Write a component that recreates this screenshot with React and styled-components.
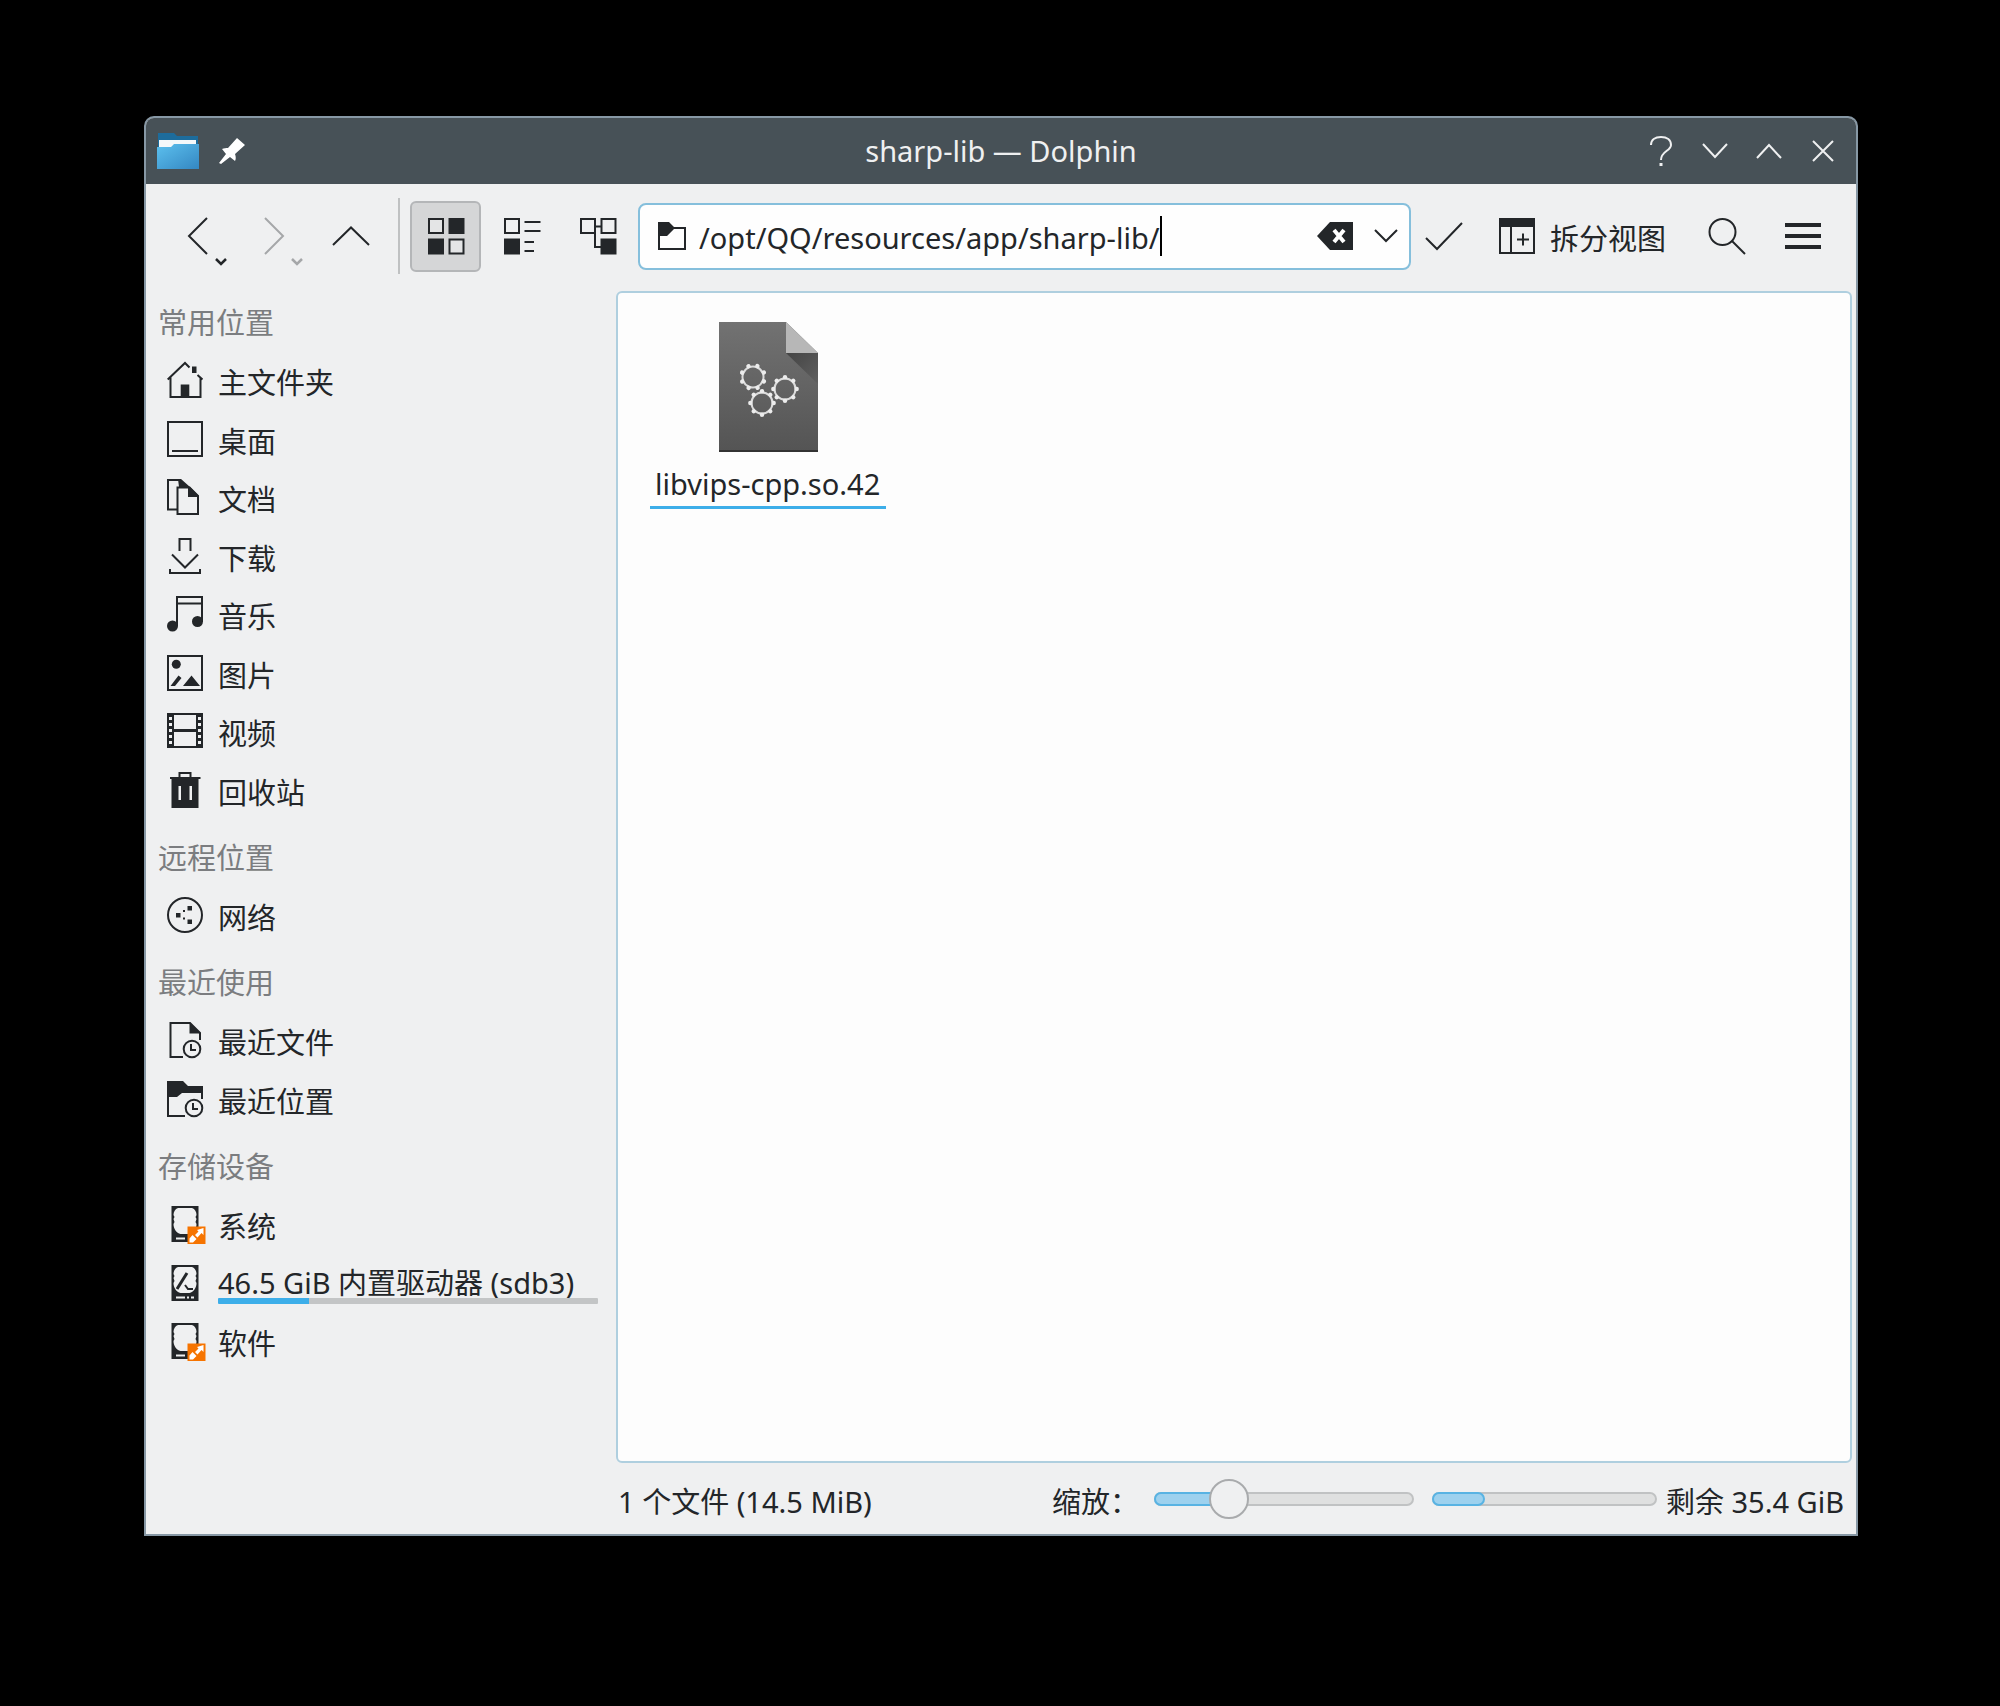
import React from "react";
import styled, { createGlobalStyle } from "styled-components";

const ink = "#232629";
const panel = "#eff0f1";
const accent = "#3daee9";

const GlobalStyle = createGlobalStyle`
  *, *::before, *::after { box-sizing: border-box; }
  body {
    margin: 0;
    background: #000;
    color: ${ink};
    font: 29px/40px "Noto Sans", "Noto Sans CJK SC", sans-serif;
  }
  button, input { font: inherit; color: inherit; }
`;

const Desktop = styled.div`
  display: flex;
  min-height: 100vh;
  padding: 116px 142px 170px 144px;
`;

const Window = styled.main`
  flex: 1;
  display: flex;
  flex-direction: column;
  min-width: 0;
  border: 2px solid #8798a5;
  border-radius: 10px 10px 0 0;
  overflow: hidden;
  background: ${panel};
`;

const TitleBar = styled.header`
  display: grid;
  grid-template-columns: 1fr auto 1fr;
  align-items: center;
  height: 66px;
  padding: 0 6px;
  background: #475157;
  color: #eff0f1;
`;

const TitleIcons = styled.div`
  display: flex;
  align-items: center;
  gap: 18px;
  padding-left: 5px;
`;

const Title = styled.h1`
  margin: 0;
  font-size: 29px;
  font-weight: 400;
`;

const TitleButtons = styled.div`
  display: flex;
  justify-content: flex-end;
`;

const TitleButton = styled.button`
  display: grid;
  place-items: center;
  width: 54px;
  height: 54px;
  padding: 0;
  border: 0;
  background: none;
`;

const PinButton = styled(TitleButton)`
  width: 30px;
`;

const Toolbar = styled.div`
  display: flex;
  align-items: center;
  gap: 5px;
  padding: 14px 18px 17px 17px;
`;

const ToolButton = styled.button`
  flex: none;
  display: flex;
  align-items: center;
  justify-content: center;
  gap: 15px;
  width: ${(p) => p.$width || "71px"};
  height: 71px;
  padding: ${(p) => (p.$width === "auto" ? "0 18px 0 20px" : "0")};
  border: 2px solid ${(p) => (p.$checked ? "#b4b6b8" : "transparent")};
  border-radius: 6px;
  background: ${(p) => (p.$checked ? "#d5d6d7" : "none")};
  color: ${(p) => (p.disabled ? "#a5a7a9" : ink)};
`;

const ToolLabel = styled.span`
  padding-top: 5px;
`;

const Separator = styled.div`
  width: 2px;
  height: 76px;
  margin: 0 5px 0 7px;
  background: #bfc1c2;
`;

const Location = styled.form`
  flex: 1;
  display: flex;
  align-items: center;
  min-width: 0;
  height: 67px;
  padding: 0 0 0 18px;
  border: 2px solid #85bfdc;
  border-radius: 8px;
  background: #fefefe;
`;

const PathInput = styled.input`
  field-sizing: content;
  min-width: 0;
  height: 42px;
  margin-left: 13px;
  padding: 2px 0 0;
  border: 0;
  outline: 0;
  background: none;
  caret-color: transparent;
`;

const Caret = styled.span`
  width: 2px;
  height: 40px;
  margin-right: auto;
  background: #000;
`;

const FieldButton = styled.button`
  display: grid;
  place-items: center;
  width: 46px;
  height: 46px;
  margin-left: 5px;
  padding: 0;
  border: 0;
  background: none;
`;

const Body = styled.div`
  flex: 1;
  display: grid;
  grid-template-columns: 470px minmax(0, 1fr);
`;

const Sidebar = styled.nav`
  padding: 2px 18px 0 0;
`;

const Group = styled.section`
  & + & { padding-top: 9px; }
`;

const GroupTitle = styled.h2`
  margin: 0;
  padding: 2px 12px 0;
  font-size: 29px;
  font-weight: 400;
  line-height: 56px;
  color: #7b7d80;
`;

const Places = styled.ul`
  display: grid;
  grid-auto-rows: 58px 59px;
  margin: 0;
  padding: 0;
  list-style: none;
`;

const Place = styled.a`
  display: flex;
  align-items: center;
  gap: 15px;
  height: 100%;
  padding-left: 21px;
  color: inherit;
  text-decoration: none;
  white-space: nowrap;
`;

const PlaceText = styled.span`
  flex: 1;
  display: flex;
  flex-direction: column;
  padding-top: 6px;
  line-height: ${(p) => (p.$compact ? "30px" : "40px")};
`;

const Capacity = styled.span`
  height: 6px;
  border-radius: 1px;
  background: linear-gradient(to right, ${accent} ${(p) => p.$used}%, #c3c5c6 ${(p) => p.$used}%);
`;

const Content = styled.div`
  display: flex;
  flex-direction: column;
  padding-right: 4px;
`;

const FileView = styled.section`
  flex: 1;
  display: flex;
  flex-wrap: wrap;
  align-content: flex-start;
  padding: 29px 32px;
  border: 2px solid #afcfdf;
  border-radius: 6px;
  background: #fdfdfd;
`;

const FileItem = styled.a`
  display: flex;
  flex-direction: column;
  align-items: center;
  gap: 12px;
  color: inherit;
  text-decoration: none;
`;

const FileName = styled.span`
  padding: 0 6px 2px 5px;
  border-bottom: 3px solid ${accent};
  line-height: 40px;
`;

const StatusBar = styled.footer`
  display: flex;
  align-items: center;
  height: 71px;
  padding: 0 8px 0 2px;
  white-space: nowrap;
`;

const StatusText = styled.span`
  padding-top: 6px;
`;

const Spacer = styled.span`
  flex: 1;
`;

const ZoomLabel = styled.label`
  margin-right: 15px;
  padding-top: 6px;
`;

const ZoomControl = styled.div`
  display: grid;
  align-items: center;
  width: 260px;
  margin-right: 18px;
  & > * { grid-area: 1 / 1; }
`;

const Rail = styled.div`
  height: 14px;
  border-radius: 7px;
  border: 2px solid #c0c2c3;
  background: #dfe0e0;
`;

const Fill = styled.div`
  width: ${(p) => p.$width}%;
  height: 14px;
  margin: -2px;
  border-radius: 7px;
  border: 2px solid #58b3e3;
  background: #9dd1ee;
`;

const Range = styled.input`
  appearance: none;
  width: 100%;
  height: 42px;
  margin: 0;
  background: none;
  &::-webkit-slider-thumb {
    appearance: none;
    width: 40px;
    height: 40px;
    border: 2px solid #a9abad;
    border-radius: 50%;
    background: #eff0f1;
  }
`;

const Meter = styled(Rail)`
  width: 225px;
  margin-right: 9px;
`;

const Svg = ({ w = 36, h = 36, sw = 2, children }) => (
  <svg width={w} height={h} viewBox={`0 0 ${w} ${h}`} fill="none" stroke="currentColor" strokeWidth={sw} overflow="visible" aria-hidden="true">
    {children}
  </svg>
);

const solid = { fill: "currentColor", stroke: "none" };

const Clock = ({ x, y }) => (
  <>
    <circle cx={x} cy={y} r="8.3" />
    <path d={`M${x - 1} ${y - 5}v6h5`} />
  </>
);

const HomeIcon = () => (
  <Svg>
    <path d="M.7 17.5 18 1l4.500 4.500M30.500 13l5 4.500M3.500 15.500V35H33.500V15.500" />
    <path {...solid} d="M25 4.500h4.500V11H25zM13.700 22.500h8.600V35h-8.600z" />
  </Svg>
);
const DesktopIcon = () => (
  <Svg><path d="M1 1h34v34H1zM5 30h26" /></Svg>
);
const DocumentsIcon = () => (
  <Svg>
    <path d="M9.500 30.500H1V1h12l7 7M10.500 8.500H22l9 9V35H10.500z" />
    <path {...solid} d="M11 0h3l9 8H12zM21 7.500h2l9 9V18H21z" />
  </Svg>
);
const DownloadIcon = () => (
  <Svg><path d="M12.500 13V1h11v12M5 16.500l13 13 13-13M3 31v4h30v-4" /></Svg>
);
const MusicIcon = () => (
  <Svg>
    <path d="M10 30V1h25v25M10 7.500h25" />
    <circle {...solid} cx="5.500" cy="30" r="5.500" />
    <circle {...solid} cx="30.500" cy="25.500" r="5.500" />
  </Svg>
);
const PictureIcon = () => (
  <Svg>
    <path d="M1 1h34v34H1z" />
    <circle {...solid} cx="9.300" cy="9.300" r="4.500" />
    <path {...solid} d="M16 31l8.500-10.500L33 31zM3.500 31H8l6.500-8-3-2.500z" />
  </Svg>
);
const VideoIcon = () => (
  <Svg>
    <path d="M1 1h34v33H1zM6 1v33M30 1v33" />
    <path strokeWidth="3" d="M6 17.500h24" />
    <path strokeWidth="4" strokeDasharray="3 3" d="M3.500 1v33M32.500 1v33" />
  </Svg>
);
const TrashIcon = () => (
  <Svg>
    <path d="M3 6h30.500M12.500 5V1h11v4" />
    <path {...solid} fillRule="evenodd" d="M4.500 6h27v30h-27zM11.500 14v14H14V14zM22.500 14v14H25V14z" />
  </Svg>
);
const NetworkIcon = () => (
  <Svg>
    <circle cx="18" cy="18" r="17" />
    <path {...solid} d="M9 16h4.500v4.500H9zM20.500 9H25v4.500h-4.500zM20.500 22.500H25V27h-4.500zM16 13h2v2h-2zM16 20.500h2v2h-2z" />
  </Svg>
);
const RecentFileIcon = () => (
  <Svg>
    <path d="M16 35H3.500V1H23l10 10v7" />
    <path {...solid} d="M22.500 0 34 11.500H22.500z" />
    <Clock x={25} y={27} />
  </Svg>
);
const RecentFolderIcon = () => (
  <Svg>
    <path d="M18 35H1V1M35 6v12" />
    <path {...solid} d="M0 0h16l5 5h15v8h-1v-1H15l-5 4H0z" />
    <Clock x={27} y={27} />
  </Svg>
);
const DiskIcon = ({ emblem }) => (
  <Svg>
    <path {...solid} fillRule="evenodd" d="M4.500 0h27v36h-27zM11 2C8 3 6.500 6 6.500 9l1 2-1 2 1 3-1 2c0 5 3 9 7 10h9c4-1 7-5 7-10l-1-2 1-3-1-2 1-2c0-3-1.500-6-4.500-7z" />
    {emblem ? (
      <>
        <path stroke={panel} d="M9 32.500h9" />
        <path fill="#f67400" stroke="none" d="M20.500 20.500h18V38h-18z" />
        <path fill="#fff" stroke="none" d="M36.500 22v7l-2-2-4 4.500-2.500-2.500 3.500-3.500-1.500-1.500zM22.500 36.500v-4l3-3.500 4 4-3.500 3.500z" />
      </>
    ) : (
      <>
        <path stroke={panel} d="M9 32.500h9M20 32.500h2M24 32.500h3" />
        <path strokeWidth="3" d="M10 24 20 8" />
        <path d="M18 20l3 4h5" />
      </>
    )}
  </Svg>
);

const BackIcon = ({ forward }) => (
  <Svg w={71} h={71}>
    <path d={forward ? "M26 17l18 18-18 18" : "M44 17 26 35l18 18"} />
    <path d="M53 58l5 5 5-5" strokeWidth="2.500" />
  </Svg>
);
const UpIcon = () => <Svg><path d="M0 27 18 9.500 36 27" /></Svg>;
const IconsViewIcon = () => (
  <Svg>
    <path fill="#e4e5e6" d="M1 1h14v14H1zM21.500 21.500h14v14h-14z" />
    <path {...solid} d="M20.500 0h16v16h-16zM0 20.500h16v16H0z" />
  </Svg>
);
const DetailsViewIcon = () => (
  <Svg>
    <path d="M1 1h14v14H1zM20.500 4h16M20.500 13h16M20.500 24H30M20.500 33H30" />
    <path {...solid} d="M0 20.500h16v16H0z" />
  </Svg>
);
const TreeViewIcon = () => (
  <Svg>
    <path d="M1 1h14v14H1zM21.500 1h14v14h-14zM15 8.500h6M15 15v14h6" />
    <path {...solid} d="M20.500 20.500h16v16h-16z" />
  </Svg>
);
const FolderIcon = () => (
  <Svg w={28} h={28}>
    <path d="M1 1v26h26V6" />
    <path {...solid} d="M0 0h11l5 5h12v2H16l-7 7H0z" />
  </Svg>
);
const ClearIcon = () => (
  <Svg w={36} h={28}>
    <path {...solid} d="M13 0h23v28H13L0 14z" />
    <path stroke="#fff" strokeWidth="4" d="M17 8l10 12M27 8 17 20" />
  </Svg>
);
const DropIcon = () => <Svg w={24} h={12}><path d="M1 0l11 11L23 0" /></Svg>;
const CheckIcon = () => <Svg><path d="M0 20l11 11L36 5" /></Svg>;
const SplitIcon = () => (
  <Svg>
    <path d="M1 1h34v34H1zM12 8v27M18 21.500h12M24 15.500v12" />
    <path {...solid} d="M0 0h36v9H0z" />
  </Svg>
);
const SearchIcon = () => <Svg><circle cx="13.500" cy="14" r="13" /><path d="M23 23l13 13" /></Svg>;
const MenuIcon = () => <Svg sw={4}><path d="M0 7h36M0 18h36M0 29h36" /></Svg>;

const AppIcon = () => (
  <svg width="42" height="36" viewBox="0 0 42 36" aria-hidden="true">
    <defs>
      <linearGradient id="folder" x1="0" y1="0" x2="1" y2="1">
        <stop offset="0" stopColor="#5cc0ee" />
        <stop offset="1" stopColor="#3487c2" />
      </linearGradient>
    </defs>
    <path fill="#1d6c9c" d="M1 0h16l3 3h21v16H1z" />
    <path fill="#f4f8fa" d="M2 7h37v10H2z" />
    <path fill="url(#folder)" d="M0 14h14l3-3h25v25H0z" />
  </svg>
);
const PinIcon = () => (
  <svg width="26" height="26" viewBox="0 0 26 26" fill="#fff" aria-hidden="true">
    <path d="M18 0l8 7-10 9c1 3 1 5 0 7l-5-4-9 7-2-1 7-9-4-5c2-1 4-1 6-1z" />
  </svg>
);

const Gear = ({ x, y, turn }) => (
  <g transform={`translate(${x} ${y}) rotate(${turn})`}>
    <circle r="10.500" fill="none" stroke="#dcdcdc" strokeWidth="2" />
    {[0, 1, 2, 3, 4, 5, 6, 7].map((i) => (
      <circle key={i} cy="-11.700" r="2.200" fill="#ececec" transform={`rotate(${i * 45})`} />
    ))}
  </g>
);
const LibraryFileIcon = () => (
  <svg width="99" height="130" viewBox="0 0 99 130" aria-hidden="true">
    <defs>
      <linearGradient id="sheet" x1="0" y1="0" x2="0" y2="1">
        <stop offset="0" stopColor="#727272" />
        <stop offset="1" stopColor="#545454" />
      </linearGradient>
      <linearGradient id="shade" x1="0" y1="0" x2="1" y2="1">
        <stop offset="0" stopColor="#444" />
        <stop offset="1" stopColor="#606060" />
      </linearGradient>
    </defs>
    <path fill="url(#sheet)" d="M0 0h67l32 31v99H0z" />
    <path fill="url(#shade)" d="M67 31h32v31z" />
    <path fill="#b7b7b7" d="M67 0l32 31H67z" />
    <path fill="#333" d="M0 128h99v2H0z" />
    <Gear x={34} y={55} turn={22} />
    <Gear x={66} y={67} turn={0} />
    <Gear x={43} y={81} turn={0} />
  </svg>
);

const groups = [
  {
    title: "常用位置",
    places: [
      { name: "主文件夹", icon: <HomeIcon /> },
      { name: "桌面", icon: <DesktopIcon /> },
      { name: "文档", icon: <DocumentsIcon /> },
      { name: "下载", icon: <DownloadIcon /> },
      { name: "音乐", icon: <MusicIcon /> },
      { name: "图片", icon: <PictureIcon /> },
      { name: "视频", icon: <VideoIcon /> },
      { name: "回收站", icon: <TrashIcon /> },
    ],
  },
  { title: "远程位置", places: [{ name: "网络", icon: <NetworkIcon /> }] },
  {
    title: "最近使用",
    places: [
      { name: "最近文件", icon: <RecentFileIcon /> },
      { name: "最近位置", icon: <RecentFolderIcon /> },
    ],
  },
  {
    title: "存储设备",
    places: [
      { name: "系统", icon: <DiskIcon emblem /> },
      { name: "46.5 GiB 内置驱动器 (sdb3)", icon: <DiskIcon />, used: 24 },
      { name: "软件", icon: <DiskIcon emblem /> },
    ],
  },
];

export default function App() {
  return (
    <>
      <GlobalStyle />
      <Desktop>
        <Window>
          <TitleBar>
            <TitleIcons>
              <AppIcon />
              <PinButton aria-label="Pin"><PinIcon /></PinButton>
            </TitleIcons>
            <Title>sharp-lib — Dolphin</Title>
            <TitleButtons>
              <TitleButton aria-label="Help">
                <Svg w={22} h={30}>
                  <path d="M1 9c0-5 4-8 10-8s10 3 10 8c0 6-10 6-10 15" />
                  <path {...solid} d="M9.500 27h3v3h-3z" />
                </Svg>
              </TitleButton>
              <TitleButton aria-label="Minimize"><Svg w={26} h={14}><path d="M1 0l12 13L25 0" /></Svg></TitleButton>
              <TitleButton aria-label="Maximize"><Svg w={26} h={14}><path d="M1 14 13 1l12 13" /></Svg></TitleButton>
              <TitleButton aria-label="Close"><Svg w={20} h={20}><path d="M0 0l20 20M20 0 0 20" /></Svg></TitleButton>
            </TitleButtons>
          </TitleBar>

          <Toolbar>
            <ToolButton aria-label="Back"><BackIcon /></ToolButton>
            <ToolButton aria-label="Forward" disabled><BackIcon forward /></ToolButton>
            <ToolButton aria-label="Up"><UpIcon /></ToolButton>
            <Separator />
            <ToolButton aria-label="Icons" aria-pressed="true" $checked><IconsViewIcon /></ToolButton>
            <ToolButton aria-label="Compact"><DetailsViewIcon /></ToolButton>
            <ToolButton aria-label="Details"><TreeViewIcon /></ToolButton>
            <Location onSubmit={(e) => e.preventDefault()}>
              <FolderIcon />
              <PathInput aria-label="Location" defaultValue="/opt/QQ/resources/app/sharp-lib/" />
              <Caret />
              <FieldButton type="button" aria-label="Clear"><ClearIcon /></FieldButton>
              <FieldButton type="button" aria-label="History"><DropIcon /></FieldButton>
            </Location>
            <ToolButton aria-label="Go" $width="56px"><CheckIcon /></ToolButton>
            <ToolButton $width="auto"><SplitIcon /><ToolLabel>拆分视图</ToolLabel></ToolButton>
            <ToolButton aria-label="Search"><SearchIcon /></ToolButton>
            <ToolButton aria-label="Menu"><MenuIcon /></ToolButton>
          </Toolbar>

          <Body>
            <Sidebar>
              {groups.map((group) => (
                <Group key={group.title}>
                  <GroupTitle>{group.title}</GroupTitle>
                  <Places>
                    {group.places.map((place) => (
                      <li key={place.name}>
                        <Place href="#">
                          {place.icon}
                          <PlaceText $compact={place.used}>
                            {place.name}
                            {place.used && <Capacity $used={place.used} />}
                          </PlaceText>
                        </Place>
                      </li>
                    ))}
                  </Places>
                </Group>
              ))}
            </Sidebar>
            <Content>
              <FileView>
                <FileItem href="#">
                  <LibraryFileIcon />
                  <FileName>libvips-cpp.so.42</FileName>
                </FileItem>
              </FileView>
              <StatusBar>
                <StatusText>1 个文件 (14.5 MiB)</StatusText>
                <Spacer />
                <ZoomLabel htmlFor="zoom">缩放：</ZoomLabel>
                <ZoomControl>
                  <Rail><Fill $width={28} /></Rail>
                  <Range id="zoom" type="range" min="0" max="100" defaultValue="25" />
                </ZoomControl>
                <Meter role="meter" aria-label="剩余 35.4 GiB" aria-valuemin={0} aria-valuemax={100} aria-valuenow={24}>
                  <Fill $width={24} />
                </Meter>
                <StatusText>剩余 35.4 GiB</StatusText>
              </StatusBar>
            </Content>
          </Body>
        </Window>
      </Desktop>
    </>
  );
}
